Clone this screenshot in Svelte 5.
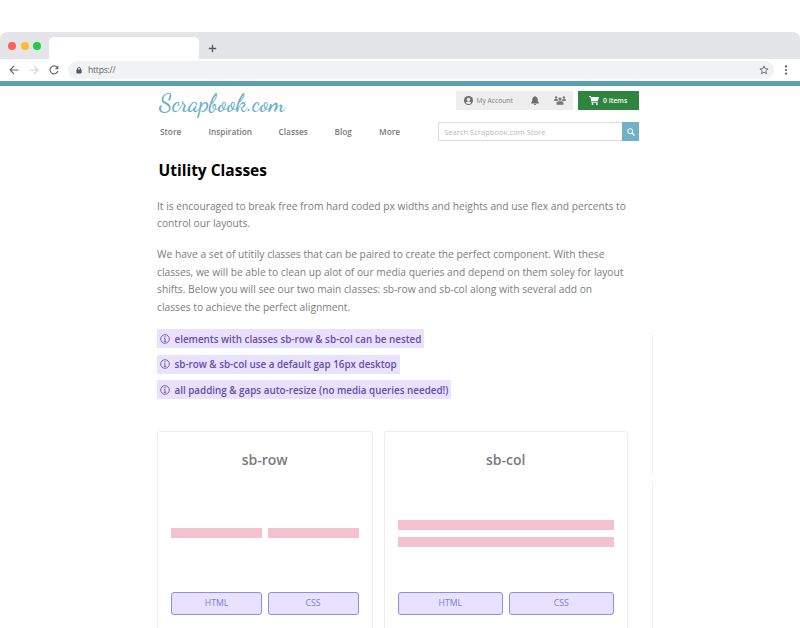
<script>
  const nav = ['Store', 'Inspiration', 'Classes', 'Blog', 'More'];
  const intro = [
    ['It is encouraged to break free from hard coded px widths and heights and use flex and percents to', 'control our layouts.'],
    [
      'We have a set of utitily classes that can be paired to create the perfect component. With these',
      'classes, we will be able to clean up alot of our media queries and depend on them soley for layout',
      'shifts. Below you will see our two main classes: sb-row and sb-col along with several add on',
      'classes to achieve the perfect alignment.'
    ]
  ];
  const notes = [
    'elements with classes sb-row & sb-col can be nested',
    'sb-row & sb-col use a default gap 16px desktop',
    'all padding & gaps auto-resize (no media queries needed!)'
  ];
  const cards = [
    { name: 'sb-row', kind: 'row' },
    { name: 'sb-col', kind: 'col' }
  ];
</script>

<div class="window">
  <div class="tabs">
    <i class="dot red"></i><i class="dot yellow"></i><i class="dot green"></i>
    <div class="tab"></div>
    <svg class="plus" width="9" height="9" viewBox="0 0 9 9"><path d="M4.5 .8v7.4M.8 4.5h7.4" stroke="#55585c" stroke-width="1.3" /></svg>
  </div>
  <div class="toolbar">
    <svg width="10" height="10" viewBox="0 0 10 10"><path d="M9.4 5H1.2M5 1L1 5l4 4" fill="none" stroke="#66696d" stroke-width="1.1" /></svg>
    <svg width="10" height="10" viewBox="0 0 10 10"><path d="M.6 5h8.2M5 1l4 4-4 4" fill="none" stroke="#d2d4d6" stroke-width="1.1" /></svg>
    <svg width="10" height="10" viewBox="0 0 10 10"><path d="M8.2 2.4A4 4 0 1 0 8.9 6" fill="none" stroke="#66696d" stroke-width="1.2" /><path d="M9.4.5v3.7H5.7z" fill="#66696d" /></svg>
    <div class="address">
      <svg width="6" height="7" viewBox="0 0 6 7"><path d="M1.5 3V2a1.5 1.5 0 0 1 3 0v1" fill="none" stroke="#55585c" stroke-width=".9" /><rect x=".4" y="2.5" width="5.2" height="4" rx=".8" fill="#55585c" /></svg>
      <span>https://</span>
      <svg class="star" width="10" height="10" viewBox="0 0 10 10"><path d="M5 .9l1.1 2.8 3 .2-2.3 1.9.8 3L5 7.2 2.4 8.8l.8-3L.9 3.9l3-.2z" fill="none" stroke="#66696d" stroke-width=".9" /></svg>
    </div>
    <svg class="menu" width="4" height="10" viewBox="0 0 4 10"><g fill="#55585c"><circle cx="2" cy="1.4" r="1.1" /><circle cx="2" cy="5" r="1.1" /><circle cx="2" cy="8.6" r="1.1" /></g></svg>
  </div>

  <header>
    <div class="left">
      <div class="logo">Scrapbook.com</div>
      <nav>
        {#each nav as label}<a class={label.toLowerCase()}>{label}</a>{/each}
      </nav>
    </div>
    <div class="right">
      <div class="actions">
        <div class="account">
          <svg width="9" height="9" viewBox="0 0 9 9"><circle cx="4.5" cy="4.5" r="4.5" fill="#6d6d6d" /><circle cx="4.5" cy="3.4" r="1.7" fill="#eee" /><path d="M1.8 7.1c.4-1.3 1.3-1.6 2.7-1.6s2.3.3 2.7 1.6A4 4 0 0 1 4.5 8a4 4 0 0 1-2.7-.9z" fill="#eee" /></svg>
          <span>My Account</span>
          <svg class="bell" width="8" height="9" viewBox="0 0 8 9"><path d="M4 0c.4 0 .6.3.6.7C6 1 6.700 2.100 6.700 3.500c0 1.700.4 2.300 1.100 3 .3.400.1.900-.4.900H.6c-.5 0-.7-.5-.4-.9.7-.7 1.100-1.300 1.100-3C1.300 2.100 2 1 3.400.7 3.400.3 3.600 0 4 0zM2.900 7.900h2.200a1.100 1.100 0 0 1-2.200 0z" fill="#6d6d6d" /></svg>
          <svg width="12" height="9" viewBox="0 0 12 9"><g fill="#7b7b7b"><circle cx="2.100" cy="1.500" r="1.200" /><circle cx="9.900" cy="1.500" r="1.200" /><circle cx="6" cy="3.100" r="1.700" /><path d="M.2 5V4.200C.2 3.500.7 3.100 1.400 3.100h1.500c.4 0 .7.200.9.400-.1.600 0 1 .3 1.500zM11.800 5V4.200c0-.7-.5-1.100-1.200-1.100H9.100c-.4 0-.7.200-.9.400.1.600 0 1-.3 1.500zM2.500 8.700V7.400c0-1.200.9-2.100 2.100-2.100h2.800c1.200 0 2.100.9 2.100 2.100v1.300z" /></g></svg>
        </div>
        <div class="cart">
          <svg width="10" height="9" viewBox="0 0 10 9"><path d="M0 0h1.900l.3 1H10L8.900 5.300H3.200l.2.800h5.200v.7H2.600L1.300.9H0z" fill="#fff" /><circle cx="3.500" cy="8" r=".9" fill="#fff" /><circle cx="7.900" cy="8" r=".9" fill="#fff" /></svg>
          <span>0 items</span>
        </div>
      </div>
      <div class="search">
        <span>Search Scrapbook.com Store</span>
        <div class="go"><svg width="8" height="8" viewBox="0 0 8 8"><circle cx="3.200" cy="3.200" r="2.500" fill="none" stroke="#fff" stroke-width="1" /><path d="M5 5l2.500 2.500" stroke="#fff" stroke-width="1.200" /></svg></div>
      </div>
    </div>
  </header>

  <div class="body">
    <main>
      <h1>Utility Classes</h1>
      {#each intro as lines}
        <p>{#each lines as line}<span>{line}</span>{/each}</p>
      {/each}
      <ul>
        {#each notes as note}
          <li>
            <svg width="10" height="10" viewBox="0 0 10 10"><circle cx="5" cy="5" r="4.300" fill="none" stroke="#6b55b0" stroke-width=".9" /><path d="M4.100 4.400H5v2.900M3.900 7.400h2.200" fill="none" stroke="#6b55b0" stroke-width=".9" /><circle cx="5" cy="2.700" r=".65" fill="#6b55b0" /></svg>
            <span>{note}</span>
          </li>
        {/each}
      </ul>
      <div class="cards">
        {#each cards as card}
          <section class={card.kind}>
            <h2>{card.name}</h2>
            <div class="demo"><i></i><i></i></div>
            <div class="buttons"><button>HTML</button><button>CSS</button></div>
          </section>
        {/each}
      </div>
    </main>
    <aside><div class="edge"></div><div class="edge open"></div></aside>
  </div>
</div>

<style>
  :global(body) { background: #fff; overflow: hidden; }
  .window { width: 800px; height: 628px; overflow: hidden; box-sizing: border-box; padding-top: 32px; background: #fff; font-family: "Open Sans", sans-serif; color: #707070; white-space: nowrap; display: flex; flex-direction: column; }
  .window * { box-sizing: border-box; }
  svg { display: block; flex: none; }
  .tabs { flex: none; height: 27px; background: #e4e5e9; border-radius: 7px 7px 0 0; display: flex; align-items: center; padding-left: 8px; }
  .dot { width: 8px; height: 8px; border-radius: 50%; margin-right: 4.500px; }
  .red { background: #fe5f57; }
  .yellow { background: #febc2f; }
  .green { background: #29c941; }
  .tab { width: 150px; height: 22px; margin: 5px 0 0 3.500px; background: #fff; border-radius: 5px 5px 0 0; }
  .plus { margin: 5px 0 0 9px; }
  .toolbar { flex: none; height: 22px; display: flex; align-items: center; padding-left: 9px; gap: 10px; }
  .address { width: 706px; height: 18px; margin-left: -1px; background: #f0f2f4; border-radius: 9px; display: flex; align-items: center; padding: 0 5px 0 8px; color: #606468; font: 8.600px "Open Sans", sans-serif; letter-spacing: -.25px; }
  .address span { margin-left: 6px; }
  .star { margin-left: auto; }

  header { flex: none; height: 64px; border-top: 5px solid #5a9fb4; padding-left: 158px; display: flex; }
  .left { width: 280px; }
  .logo { height: 36px; padding-left: 1px; color: #68afc6; font: 500 24px/35px "Dancing Script", "Liberation Serif", serif; letter-spacing: .05px; }
  nav { display: flex; padding-left: 2px; height: 20px; line-height: 20.500px; font-size: 8.300px; font-weight: 600; color: #7a7a7a; }
  nav a { width: 44.500px; }
  nav .store { width: 48.500px; }
  nav .inspiration { width: 70px; }
  nav .classes { width: 56px; }
  .right { width: 201px; padding-top: 5px; }
  .actions { display: flex; justify-content: flex-end; gap: 5px; }
  .account { width: 117px; height: 19px; background: #eee; display: flex; align-items: center; padding-left: 8px; font-size: 6.700px; color: #808080; }
  .account span { width: 54px; margin-left: 3.500px; }
  .bell { margin-right: 15px; }
  .cart { width: 61px; height: 19px; background: #2d8540; color: #fff; display: flex; align-items: center; padding-left: 11px; gap: 4px; font-size: 6.900px; font-weight: 600; }
  .cart span { margin-top: -1px; }
  .search { margin-top: 12px; height: 19px; border: 1px solid #dedede; border-right: 0; display: flex; align-items: center; padding-left: 5px; color: #b9b9b9; font-size: 7.600px; }
  .go { width: 17px; height: 19px; margin-left: auto; background: #72b0c5; display: flex; align-items: center; justify-content: center; }

  .body { flex: 1; display: flex; min-height: 0; padding-left: 157px; }
  main { width: 471px; flex: none; }
  h1 { margin: 10px 0 0 1.500px; padding-top: 4px; color: #000; font-size: 15.500px; line-height: 22px; font-weight: 700; }
  p { margin: 0 0 13.500px; font-size: 10.260px; line-height: 17.600px; color: #7d7d7d; }
  h1 + p { margin-top: 16.500px; }
  p span { display: block; }
  ul { list-style: none; margin: -1px 0 0; padding: 0; display: flex; flex-direction: column; align-items: flex-start; gap: 6.400px; }
  li { height: 19.200px; background: #e9e1fe; color: #644eaa; display: flex; align-items: center; padding: 0 3px; gap: 4.500px; font-size: 9.830px; font-weight: 600; }
  .cards { margin-top: 31.500px; display: flex; gap: 11px; }
  section { height: 220px; border: 1px solid #ededed; border-radius: 3px; padding: 17px 13px 0; width: 216px; }
  section.col { width: 245px; }
  h2 { margin: 0; text-align: center; line-height: 22px; font-size: 14px; font-weight: 600; color: #7b7b7b; }
  .demo { height: 121px; display: flex; gap: 6.500px; align-items: center; padding-top: 4px; }
  .demo i { flex: 1; height: 10px; background: #f4c2ce; }
  .col .demo { flex-direction: column; justify-content: center; }
  .col .demo i { flex: none; width: 100%; }
  .buttons { display: flex; gap: 5.500px; }
  button { flex: 1; height: 23px; padding: 0; background: #e9e1fe; border: 1px solid #8391ea; border-radius: 3px; color: #7480dc; font: 8.700px "Open Sans", sans-serif; }
  aside { margin: 184px 0 0 21px; padding-top: 0; }
  aside::before { content: ""; display: block; height: 4px; }
  .edge { width: 4px; height: 141px; border: 1px solid #f0f0f0; border-left: 0; border-radius: 0 2px 2px 0; margin-bottom: 7px; }
  .open { height: 160px; }
</style>
